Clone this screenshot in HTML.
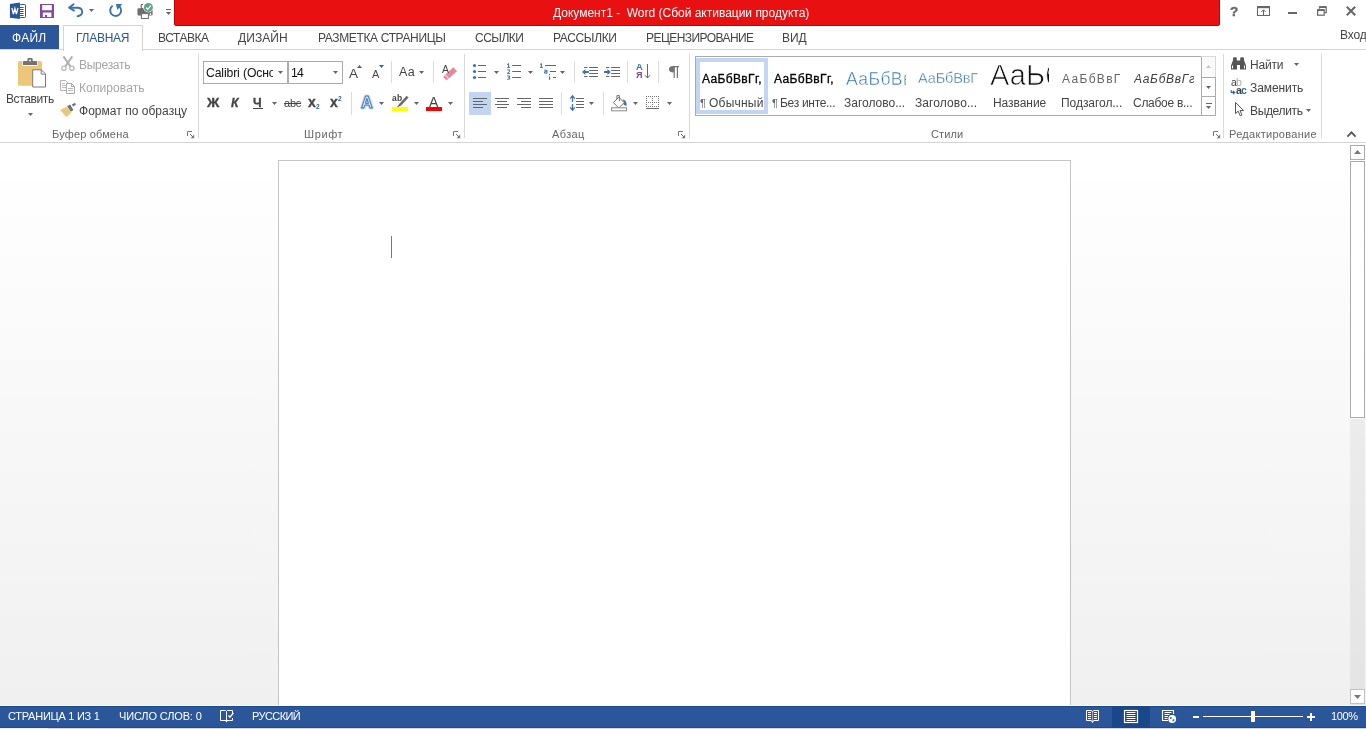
<!DOCTYPE html>
<html lang="ru">
<head>
<meta charset="utf-8">
<title>Документ1 - Word</title>
<style>
html,body{margin:0;padding:0;background:#fff;}
body{width:1366px;height:729px;overflow:hidden;font-family:"Liberation Sans",sans-serif;font-size:12px;}
#w{position:relative;width:1366px;height:729px;overflow:hidden;background:#fff;}
#w div,#w svg{position:absolute;}
.t{white-space:nowrap;will-change:transform;}
.vs{width:1px;background:#dcdcdc;}
.gs{width:1px;background:#dadada;top:54px;height:84px;}
.ar{width:5px;height:3px;background:#666;clip-path:polygon(0 0,100% 0,50% 100%);}
.au{width:5px;height:3px;background:#666;clip-path:polygon(0 100%,100% 100%,50% 0);}
</style>
</head>
<body>
<div id="w">
<!-- title bar -->
<div style="left:174px;top:-2px;width:1044px;height:26px;background:#e81010;border:1px solid #c40404;border-radius:2px;"></div>
<!-- tabs row -->
<div style="left:0;top:25px;width:59px;height:24px;background:#2b579a;"></div>
<div style="left:0;top:49px;width:1366px;height:1px;background:#d4d4d4;"></div>
<div style="left:63px;top:25px;width:78px;height:25px;background:#fff;border:1px solid #d4d4d4;border-bottom:none;"></div>
<!-- ribbon -->
<div style="left:0;top:142px;width:1366px;height:1px;background:#d4d4d4;"></div>
<div class="gs" style="left:198px;"></div>
<div class="gs" style="left:464px;"></div>
<div class="gs" style="left:689px;"></div>
<div class="gs" style="left:1223px;"></div>
<div class="gs" style="left:1321px;"></div>
<!-- workspace -->
<div style="left:0;top:143px;width:1366px;height:563px;background:linear-gradient(#fff 0px,#fff 17px,#f0f0f0 563px);"></div>
<div style="left:278px;top:160px;width:791px;height:560px;background:#fff;border:1px solid #c6c6c6;"></div>
<div style="left:391px;top:236px;width:1px;height:22px;background:#777;"></div>
<!-- scrollbar -->
<div style="left:1350px;top:419px;width:15px;height:286px;background:rgba(0,0,0,0.048);"></div>
<div style="left:1350px;top:145px;width:13px;height:13px;background:#fff;border:1px solid #ababab;"></div>
<div style="left:1350px;top:161px;width:13px;height:255px;background:#fff;border:1px solid #ababab;"></div>
<div style="left:1350px;top:689px;width:13px;height:13px;background:#fff;border:1px solid #c2c2c2;"></div>
<div style="left:0;top:705px;width:1366px;height:1px;background:#fbf9f5;"></div>
<!-- status bar -->
<div style="left:0;top:706px;width:1366px;height:22px;background:#2b579a;border-top:1px solid #1d4b90;border-bottom:1px solid #1d4b90;box-sizing:border-box;"></div>
<div style="left:1112px;top:706px;width:38px;height:22px;background:#19478a;"></div>
<div style="left:0;top:728px;width:1366px;height:1px;background:#d9d5d0;"></div>
<div style="left:0;top:728px;width:48px;height:1px;background:#e8f0f8;"></div>
<!-- font combos -->
<div style="left:203px;top:61px;width:83px;height:21px;background:#fff;border:1px solid #ababab;"></div>
<div style="left:288px;top:61px;width:53px;height:21px;background:#fff;border:1px solid #ababab;"></div>
<!-- selected align-left -->
<div style="left:469px;top:92px;width:22px;height:23px;background:#c2d5f2;"></div>
<!-- styles gallery -->
<div style="left:695px;top:56px;width:519px;height:58px;background:#fff;border:1px solid #ababab;"></div>
<div style="left:696px;top:58px;width:64px;height:48px;border:4px solid #c2d5f2;"></div>
<div style="left:1201px;top:56px;width:13px;height:58px;border:1px solid #ababab;background:#fff;"></div>
<div style="left:1201px;top:77px;width:15px;height:1px;background:#ababab;"></div>
<div style="left:1201px;top:96px;width:15px;height:1px;background:#ababab;"></div>
<!-- QAT icons -->
<svg style="left:9px;top:2px" width="18" height="18" viewBox="0 0 18 18">
 <rect x="10.5" y="2.5" width="6" height="13" fill="#fff" stroke="#2b579a" rx="0.8"/>
 <path d="M11 5.5H14.6M11 7.5H14.6M11 9.5H14.6M11 11.5H14.6M11 13.5H14.6" stroke="#2b579a" stroke-width="1"/>
 <path d="M0.9 2L10.9 0.6V16.9L0.9 15.7Z" fill="#2b579a"/>
 <path d="M2.9 5.8L4.4 12.2L5.9 6.6L7.4 12.2L8.9 5.8" fill="none" stroke="#fff" stroke-width="1.3"/>
</svg>
<svg style="left:40px;top:4px" width="14" height="14" viewBox="0 0 14 14">
 <path d="M0 0H14V14H0Z M2.2 0.9V6.2H11.8V0.9Z M2.8 8.6V12.9H5V11H7V12.9H11.4V8.6Z" fill="#8647a6" fill-rule="evenodd"/>
</svg>
<svg style="left:68px;top:3px" width="16" height="15" viewBox="0 0 16 15">
 <path d="M1.2 4.6L5.6 1.2M1.2 4.6L6 7.6" stroke="#3a72b4" stroke-width="1.9" fill="none" stroke-linecap="round"/>
 <path d="M2 4.7H9.2C12.4 4.7 14.2 6.6 14.2 9C14.2 11.2 12.6 12.6 9.6 13.2" stroke="#3a72b4" stroke-width="1.9" fill="none" stroke-linecap="round"/>
</svg>
<div class="ar" style="left:89px;top:9px;"></div>
<svg style="left:108px;top:3px" width="16" height="15" viewBox="0 0 16 15">
 <path d="M11.6 3.6A5.5 5.5 0 1 1 4.7 2.8" stroke="#3a72b4" stroke-width="1.9" fill="none"/>
 <path d="M7.9 1H14.2L9.4 7Z" fill="#3a72b4"/>
</svg>
<svg style="left:136px;top:2px" width="18" height="18" viewBox="0 0 18 18">
 <path d="M7 2.5H5.2V6.5H7" stroke="#555" stroke-width="1" fill="none"/>
 <path d="M1.5 7.2Q1.5 6.2 2.5 6.2H15.5Q16.6 6.2 16.6 7.2V12.6Q16.6 13.6 15.5 13.6H2.5Q1.5 13.6 1.5 12.6Z" fill="#6e6e6e"/>
 <rect x="5.4" y="11.6" width="7" height="4.9" fill="#fff" stroke="#6e6e6e" stroke-width="1"/>
 <circle cx="14.5" cy="12.1" r="0.9" fill="#fff"/>
 <circle cx="12.4" cy="5.4" r="5.1" fill="#fff"/>
 <circle cx="12.4" cy="5.4" r="4.5" fill="#5fa48a"/>
 <path d="M10.1 5.6L11.8 7.3L14.8 3.7" stroke="#fff" stroke-width="1.3" fill="none"/>
</svg>
<div style="left:166px;top:9px;width:5px;height:1px;background:#666;"></div>
<div class="ar" style="left:166px;top:12px;"></div>
<!-- Clipboard group -->
<svg style="left:16px;top:56px" width="32" height="33" viewBox="0 0 32 33">
 <rect x="2" y="5" width="24" height="24.8" rx="1.6" fill="#ecc679"/>
 <rect x="6.4" y="4.6" width="15.2" height="5.2" fill="#fff"/>
 <path d="M7 5.8Q7 5 7.8 5H11.4V3.2Q11.4 2 12.6 2H15.5Q16.7 2 16.7 3.2V5H20.2Q21 5 21 5.8V9H7Z" fill="#737373"/>
 <rect x="13.2" y="3.6" width="1.7" height="1.7" fill="#fff"/>
 <path d="M16.7 13.8H25.4L29.5 17.9V31H16.7Z" fill="#fff" stroke="#7a7a7a" stroke-width="1"/>
 <path d="M25.2 13.8V18.1H29.5" fill="none" stroke="#7a7a7a" stroke-width="1"/>
</svg>
<div class="ar" style="left:28px;top:113px;"></div>
<svg style="left:60px;top:55px" width="16" height="17" viewBox="0 0 16 17">
 <path d="M3.4 1.4L10.4 11.4M12.3 1.4L5.3 11.4" stroke="#b0b0b0" stroke-width="1.9" fill="none"/>
 <circle cx="3.9" cy="13.2" r="2.2" fill="#fff" stroke="#b0b0b0" stroke-width="1.1"/>
 <circle cx="11.9" cy="13.2" r="2.2" fill="#fff" stroke="#b0b0b0" stroke-width="1.1"/>
</svg>
<svg style="left:59px;top:79px" width="18" height="16" viewBox="0 0 18 16">
 <path d="M1.5 1.5H6.5L9 4V11.5H1.5Z" fill="#fff" stroke="#b9b2b9" stroke-width="1"/>
 <path d="M3 4.5H6M3 6.5H7.5M3 8.5H7.5" stroke="#c4bec4" stroke-width="1"/>
 <path d="M7.5 4.5H12.5L15.5 7.5V14.5H7.5Z" fill="#fff" stroke="#b0a9b0" stroke-width="1"/>
 <path d="M12.5 4.5V7.5H15.5" fill="none" stroke="#b0a9b0" stroke-width="1"/>
 <path d="M9 9.5H14M9 11.5H14" stroke="#bdb7bd" stroke-width="1"/>
</svg>
<svg style="left:59px;top:102px" width="19" height="16" viewBox="0 0 19 16">
 <path d="M1.2 7.9L7.5 4.7L12.3 10.5L8.6 14.2L7 14.7Z" fill="#ecc679"/>
 <path d="M8.1 4.2L11.2 2.4L14.4 7.9L11.8 9.8Z" fill="#737373"/>
 <path d="M12.8 2.6L16 0.8L17 2.6L14.2 4.4Z" fill="#737373"/>
</svg>
<!-- Font group -->
<div class="ar" style="left:278px;top:71px;"></div>
<div class="ar" style="left:333px;top:71px;"></div>
<div style="left:253px;top:108px;width:10px;height:1px;background:#444;"></div>
<div class="ar" style="left:272px;top:102px;"></div>
<div class="au" style="left:357px;top:65px;background:#2b66b0;"></div>
<div class="ar" style="left:379px;top:65px;background:#2b66b0;"></div>
<div class="vs" style="left:391px;top:61px;height:22px;"></div>
<div class="ar" style="left:419px;top:71px;"></div>
<div class="vs" style="left:433px;top:61px;height:22px;"></div>
<svg style="left:440px;top:65px" width="19" height="18" viewBox="0 0 19 18">
 <path d="M4.7 10.3L13.3 2.2L17 6.2L8.1 14Z" fill="#e8879b"/>
 <path d="M4.7 10.3L8.1 14L7.1 14.9Q6.5 15.4 5.9 14.8L3.7 12.4Q3.2 11.8 3.8 11.2Z" fill="#e8879b"/>
 <path d="M5.3 9.8L8.7 13.5" stroke="#fff" stroke-width="0.9"/>
</svg>
<div class="vs" style="left:351px;top:92px;height:23px;"></div>
<svg style="left:358px;top:93px" width="18" height="19" viewBox="0 0 18 19">
 <text x="8.9" y="15" text-anchor="middle" font-family="Liberation Sans, sans-serif" font-size="16" font-weight="bold" fill="#fff" stroke="#d5e3f5" stroke-width="3" stroke-linejoin="round">A</text>
 <text x="8.9" y="15" text-anchor="middle" font-family="Liberation Sans, sans-serif" font-size="16" font-weight="bold" fill="#fff" stroke="#3a73b8" stroke-width="1" stroke-linejoin="round">A</text>
</svg>
<div class="ar" style="left:379px;top:102px;"></div>
<div style="left:392px;top:107px;width:16px;height:4px;background:#ffff00;"></div>
<svg style="left:395px;top:94px" width="15" height="14" viewBox="0 0 15 14">
 <path d="M11.6 1.8L13.6 3.4L6.2 11.6L4.2 10Z" fill="#6a6a6a"/>
 <path d="M4.2 10L6.2 11.6L2 13.2Z" fill="#555"/>
</svg>
<div class="ar" style="left:414px;top:102px;"></div>
<div style="left:426px;top:107px;width:16px;height:4px;background:#ff0000;"></div>
<div class="ar" style="left:448px;top:102px;"></div>
<!-- Paragraph group row1 -->
<svg style="left:472px;top:63px" width="16" height="17" viewBox="0 0 16 17" shape-rendering="auto">
 <circle cx="2.5" cy="2.5" r="1.6" fill="#3b72b0"/><circle cx="2.5" cy="8.5" r="1.6" fill="#3b72b0"/><circle cx="2.5" cy="14.5" r="1.6" fill="#3b72b0"/>
 <path d="M6 2.5H14M6 8.5H14M6 14.5H14" stroke="#666" stroke-width="1"/>
</svg>
<div class="ar" style="left:494px;top:71px;"></div>
<svg style="left:506px;top:62px" width="16" height="19" viewBox="0 0 16 19">
 <path d="M6.2 3.5H15M6.2 9.5H15M6.2 15.5H15" stroke="#666" stroke-width="1"/>
 <path d="M1.2 2.6L2.6 1.6V5.4M1.2 5.4H4" stroke="#3b72b0" stroke-width="1" fill="none"/>
 <path d="M1.2 7.9H3.6V9.4L1.2 11.4H4" stroke="#3b72b0" stroke-width="1" fill="none"/>
 <path d="M1.2 13.9H3.6V15.4H2.2M3.6 15.4V17.2H1.2" stroke="#3b72b0" stroke-width="1" fill="none"/>
</svg>
<div class="ar" style="left:528px;top:71px;"></div>
<svg style="left:539px;top:62px" width="18" height="19" viewBox="0 0 18 19">
 <path d="M6 3.5H17M10.8 9.5H17M14 15.5H17" stroke="#666" stroke-width="1"/>
 <path d="M1 2.6L2.4 1.6V5.4M1 5.4H3.8" stroke="#3b72b0" stroke-width="1" fill="none"/>
 <path d="M5.2 8.2H8V11.2H5.6V9.7H8" stroke="#3b72b0" stroke-width="1" fill="none"/>
 <path d="M10.6 14.4V17.8M10.6 12V13.2" stroke="#3b72b0" stroke-width="1.2" fill="none"/>
</svg>
<div class="ar" style="left:560px;top:71px;"></div>
<div class="vs" style="left:574px;top:61px;height:22px;"></div>
<svg style="left:581px;top:64px" width="18" height="16" viewBox="0 0 18 16">
 <path d="M3 3.5H6.4M8.2 3.5H17M8.2 6.5H17M8.2 9.5H17M3 12.5H6.4M8.2 12.5H17" stroke="#666" stroke-width="1"/>
 <path d="M1 8L4.4 5V7H7.8V9H4.4V11Z" fill="#3b72b0"/>
</svg>
<svg style="left:603px;top:64px" width="18" height="16" viewBox="0 0 18 16">
 <path d="M3 3.5H6.4M8.2 3.5H17M8.2 6.5H17M8.2 9.5H17M3 12.5H6.4M8.2 12.5H17" stroke="#666" stroke-width="1"/>
 <path d="M7.8 8L4.4 5V7H1V9H4.4V11Z" fill="#3b72b0"/>
</svg>
<div class="vs" style="left:627px;top:61px;height:22px;"></div>
<svg style="left:644px;top:63px" width="8" height="17" viewBox="0 0 8 17">
 <path d="M3.5 1V15M1 12.2L3.5 15L6 12.2" stroke="#666" stroke-width="1" fill="none"/>
</svg>
<div class="vs" style="left:658px;top:61px;height:22px;"></div>
<svg style="left:668px;top:65px" width="12" height="14" viewBox="0 0 12 14">
 <path d="M5.4 1H11V2.2H10V13H8.8V2.2H6.8V13H5.6V7.4Q1 7.4 1 4.2Q1 1 5.4 1Z" fill="#737373"/>
</svg>
<!-- Paragraph group row2 -->
<svg style="left:473px;top:97px" width="14" height="12" viewBox="0 0 14 12"><path d="M0 1.5H14M0 4.5H10M0 7.5H14M0 10.5H10" stroke="#666" stroke-width="1.1"/></svg>
<svg style="left:495px;top:97px" width="14" height="12" viewBox="0 0 14 12"><path d="M0 1.5H14M2 4.5H12M0 7.5H14M2 10.5H12" stroke="#666" stroke-width="1.1"/></svg>
<svg style="left:517px;top:97px" width="14" height="12" viewBox="0 0 14 12"><path d="M0 1.5H14M4 4.5H14M0 7.5H14M4 10.5H14" stroke="#666" stroke-width="1.1"/></svg>
<svg style="left:539px;top:97px" width="14" height="12" viewBox="0 0 14 12"><path d="M0 1.5H14M0 4.5H14M0 7.5H14M0 10.5H14" stroke="#666" stroke-width="1.1"/></svg>
<div class="vs" style="left:561px;top:92px;height:23px;"></div>
<svg style="left:569px;top:94px" width="16" height="18" viewBox="0 0 16 18">
 <path d="M7 4.5H15M7 7.5H15M7 10.5H15M7 13.5H15" stroke="#666" stroke-width="1.1"/>
 <path d="M3.5 2V8M3.5 10V16M1.2 4.6L3.5 1.8L5.8 4.6M1.2 13.4L3.5 16.2L5.8 13.4" stroke="#3b72b0" stroke-width="1.3" fill="none"/>
</svg>
<div class="ar" style="left:589px;top:102px;"></div>
<div class="vs" style="left:603px;top:92px;height:23px;"></div>
<svg style="left:610px;top:94px" width="18" height="18" viewBox="0 0 18 18">
 <path d="M13 5.2Q17 6.6 16.6 11.8Q15 12 13.8 10.6Z" fill="#3b72b0"/>
 <path d="M8.8 3.2L14.2 8.6L8.8 14L3.4 8.6Z" fill="#fff" stroke="#737373" stroke-width="1"/>
 <path d="M6.9 5V1.6H9.4V7.2" fill="none" stroke="#737373" stroke-width="1"/>
 <rect x="1.6" y="13.8" width="15" height="3" fill="#fff" stroke="#8a8a8a" stroke-width="1"/>
</svg>
<div class="ar" style="left:633px;top:102px;"></div>
<svg style="left:646px;top:96px" width="14" height="14" viewBox="0 0 14 14">
 <path d="M0 0.5H13M0 6.5H13M0 10.5H13" stroke="#777" stroke-width="1" stroke-dasharray="1 1"/>
 <path d="M0.5 0V11M6.5 0V11M12.5 0V11" stroke="#777" stroke-width="1" stroke-dasharray="1 1"/>
 <path d="M0 12.5H13" stroke="#666" stroke-width="1"/>
</svg>
<div class="ar" style="left:667px;top:102px;"></div>
<!-- gallery scroll buttons -->
<div style="left:1202px;top:57px;width:13px;height:20px;background:#fafafa;"></div>
<div style="left:1201px;top:56px;width:15px;height:1px;background:#d8d8d8;"></div>
<div style="left:1215px;top:56px;width:1px;height:21px;background:#d8d8d8;"></div>
<div class="au" style="left:1206px;top:65px;background:#c6c6c6;"></div>
<div class="ar" style="left:1206px;top:86px;"></div>
<div style="left:1206px;top:103px;width:6px;height:1px;background:#666;"></div>
<div class="ar" style="left:1206px;top:106px;"></div>
<!-- dialog launchers -->
<svg class="dl" style="left:187px;top:131px" width="8" height="8" viewBox="0 0 8 8"><path d="M0.5 5V0.5H5M3 3L6.4 6.4" stroke="#777" stroke-width="1" fill="none"/><path d="M7.2 3.6V7.2H3.6Z" fill="#777"/></svg>
<svg class="dl" style="left:453px;top:131px" width="8" height="8" viewBox="0 0 8 8"><path d="M0.5 5V0.5H5M3 3L6.4 6.4" stroke="#777" stroke-width="1" fill="none"/><path d="M7.2 3.6V7.2H3.6Z" fill="#777"/></svg>
<svg class="dl" style="left:678px;top:131px" width="8" height="8" viewBox="0 0 8 8"><path d="M0.5 5V0.5H5M3 3L6.4 6.4" stroke="#777" stroke-width="1" fill="none"/><path d="M7.2 3.6V7.2H3.6Z" fill="#777"/></svg>
<svg class="dl" style="left:1212.6px;top:131px" width="8" height="8" viewBox="0 0 8 8"><path d="M0.5 5V0.5H5M3 3L6.4 6.4" stroke="#777" stroke-width="1" fill="none"/><path d="M7.2 3.6V7.2H3.6Z" fill="#777"/></svg>
<svg style="left:1346px;top:130px" width="11" height="8" viewBox="0 0 11 8"><path d="M1.4 6.6L5.5 2.4L9.6 6.6" stroke="#555" stroke-width="1.8" fill="none"/></svg>
<!-- Editing group -->
<svg style="left:1230px;top:56px" width="17" height="15" viewBox="0 0 17 15">
 <path d="M3 2.4Q3 1.2 4.2 1.2H5.6Q6.8 1.2 6.8 2.4V4.6H10.200000000000001V2.4Q10.2 1.2 11.4 1.2H12.8Q14 1.2 14 2.4V4.2L16 9.4V13.4H10V9H7V13.4H1V9.4L3 4.2Z" fill="#555"/>
 <path d="M2.5 9.5V12.4M14.5 9.5V12.4" stroke="#fff" stroke-width="1"/>
</svg>
<div class="ar" style="left:1294px;top:63px;"></div>
<svg style="left:1230px;top:90px" width="6" height="5" viewBox="0 0 6 5"><path d="M1.2 0V2.4H4.6M3 0.8L4.8 2.4L3 4" stroke="#2b66b0" stroke-width="1.1" fill="none"/></svg>
<svg style="left:1234px;top:101px" width="11" height="17" viewBox="0 0 11 17">
 <path d="M1.5 1.4V12.6L4.2 10.2L6.2 14.8L8 14L6 9.6H9.6Z" fill="#fff" stroke="#555" stroke-width="1" stroke-linejoin="miter"/>
</svg>
<div class="ar" style="left:1306px;top:109px;"></div>
<!-- window controls -->
<svg style="left:1256px;top:5px" width="15" height="12" viewBox="0 0 15 12">
 <rect x="1.5" y="1.5" width="12" height="9" fill="none" stroke="#666" stroke-width="1"/>
 <path d="M1.5 2.5H13.5" stroke="#666" stroke-width="1.4"/>
 <path d="M7.5 10V5M5.3 7L7.5 4.8L9.7 7" stroke="#666" stroke-width="1" fill="none"/>
</svg>
<div style="left:1288px;top:12px;width:9px;height:2px;background:#666;"></div>
<svg style="left:1316px;top:5px" width="12" height="12" viewBox="0 0 12 12">
 <path d="M3.5 3.8V1.8H10.2V7.6H8.4" fill="none" stroke="#666" stroke-width="1.2"/>
 <path d="M3.5 2.2H10.2" stroke="#666" stroke-width="1.6"/>
 <rect x="1.6" y="4.8" width="6.6" height="5.4" fill="#fff" stroke="#666" stroke-width="1.2"/>
 <path d="M1.6 5.2H8.2" stroke="#666" stroke-width="1.6"/>
</svg>
<svg style="left:1345px;top:5px" width="12" height="12" viewBox="0 0 12 12">
 <path d="M1.8 1.8L10.2 10.2M10.2 1.8L1.8 10.2" stroke="#666" stroke-width="2" fill="none"/>
</svg>
<!-- status bar icons -->
<svg style="left:219px;top:709px" width="16" height="15" viewBox="0 0 16 15">
 <path d="M1.5 1.5H6.5L7.5 2.5V11.5H1.5Z" fill="none" stroke="#fff" stroke-width="1"/>
 <path d="M7.5 2.5L8.5 1.5H13.5V5M7.5 11.5H13.5V9" fill="none" stroke="#fff" stroke-width="1"/>
 <path d="M6 11.5L7.5 13.6L9 11.5Z" fill="#fff"/>
 <path d="M9.4 6.4L11 8.2L14.4 3.8" fill="none" stroke="#fff" stroke-width="1.3"/>
</svg>
<svg style="left:1085px;top:709px" width="15" height="15" viewBox="0 0 15 15">
 <path d="M1.5 1.5H6L7.5 2.5L9 1.5H13.5V11.5H9L7.5 12.5L6 11.5H1.5Z" fill="none" stroke="#fff" stroke-width="1"/>
 <path d="M3 3.5H6M3 5.5H6M3 7.5H6M3 9.5H6M9 3.5H12M9 5.5H12M9 7.5H12M9 9.5H12" stroke="#fff" stroke-width="1"/>
 <path d="M7.5 2.5V12.5" stroke="#fff" stroke-width="1.2" stroke-dasharray="1 1"/>
 <path d="M6.2 12.2L7.5 14L8.8 12.2Z" fill="#fff"/>
</svg>
<svg style="left:1123px;top:709px" width="16" height="15" viewBox="0 0 16 15">
 <rect x="1.5" y="1.5" width="13" height="12" fill="none" stroke="#fff" stroke-width="1.2"/>
 <path d="M3.5 3.5H12.5M3.5 5.5H12.5M3.5 7.5H12.5M3.5 9.5H12.5M3.5 11.5H12.5" stroke="#fff" stroke-width="1"/>
</svg>
<svg style="left:1161px;top:709px" width="17" height="16" viewBox="0 0 17 16">
 <path d="M12.5 5V1.5H1.5V11.5H7" fill="none" stroke="#fff" stroke-width="1.1"/>
 <path d="M3.5 3.5H10.5M3.5 5.5H8.5M3.5 7.5H7M3.5 9.5H6.5" stroke="#fff" stroke-width="1"/>
 <circle cx="11.2" cy="10" r="3.9" fill="#fff"/>
 <path d="M9 8.4Q10.4 7.4 11 8.8Q10 10.4 9.2 10Z M11.6 10.6Q13.2 9.6 13.6 11Q12.6 12.8 11.6 12.4Z" fill="#2b579a"/>
</svg>
<div style="left:1193px;top:716px;width:6px;height:2px;background:#fff;"></div>
<div style="left:1203px;top:716px;width:100px;height:1px;background:#fff;"></div>
<div style="left:1251px;top:711px;width:4px;height:11px;background:#fff;"></div>
<div style="left:1307px;top:716px;width:8px;height:2px;background:#fff;"></div>
<div style="left:1310px;top:713px;width:2px;height:8px;background:#fff;"></div>
<!-- scrollbar arrows -->
<svg style="left:1354px;top:150px" width="7" height="4" viewBox="0 0 7 4"><path d="M0 4L3.5 0L7 4Z" fill="#777"/></svg>
<svg style="left:1354px;top:695px" width="7" height="4" viewBox="0 0 7 4"><path d="M0 0L3.5 4L7 0Z" fill="#777"/></svg>
<div class="t" style="left:553.4px;top:4.5px;font-size:12px;line-height:16px;color:#fff;letter-spacing:-0.01px;white-space:pre;">Документ1 -  Word (Сбой активации продукта)</div>
<div class="t" style="left:1340.4px;top:26.8px;font-size:12px;line-height:16px;color:#444;letter-spacing:-0.14px;">Вход</div>
<div class="t" style="left:11.8px;top:29.5px;font-size:12px;line-height:16px;color:#fff;letter-spacing:0.28px;">ФАЙЛ</div>
<div class="t" style="left:76.4px;top:29.5px;font-size:12px;line-height:16px;color:#2b579a;letter-spacing:-0.26px;">ГЛАВНАЯ</div>
<div class="t" style="left:158.4px;top:29.5px;font-size:12px;line-height:16px;color:#444;letter-spacing:-0.46px;">ВСТАВКА</div>
<div class="t" style="left:238.4px;top:29.5px;font-size:12px;line-height:16px;color:#444;letter-spacing:0.08px;">ДИЗАЙН</div>
<div class="t" style="left:317.6px;top:29.5px;font-size:12px;line-height:16px;color:#444;letter-spacing:-0.36px;">РАЗМЕТКА СТРАНИЦЫ</div>
<div class="t" style="left:474.7px;top:29.5px;font-size:12px;line-height:16px;color:#444;letter-spacing:-0.49px;">ССЫЛКИ</div>
<div class="t" style="left:552.8px;top:29.5px;font-size:12px;line-height:16px;color:#444;letter-spacing:-0.35px;">РАССЫЛКИ</div>
<div class="t" style="left:645.6px;top:29.5px;font-size:12px;line-height:16px;color:#444;letter-spacing:-0.56px;">РЕЦЕНЗИРОВАНИЕ</div>
<div class="t" style="left:782.2px;top:29.5px;font-size:12px;line-height:16px;color:#444;letter-spacing:-0.06px;">ВИД</div>
<div class="t" style="left:6.4px;top:90.8px;font-size:12px;line-height:16px;color:#444;letter-spacing:-0.38px;">Вставить</div>
<div class="t" style="left:78.9px;top:57.0px;font-size:12px;line-height:16px;color:#a6a6a6;letter-spacing:-0.27px;">Вырезать</div>
<div class="t" style="left:78.9px;top:80.0px;font-size:12px;line-height:16px;color:#a6a6a6;letter-spacing:0.11px;">Копировать</div>
<div class="t" style="left:78.9px;top:103.0px;font-size:12px;line-height:16px;color:#444;letter-spacing:0.03px;">Формат по образцу</div>
<div class="t" style="left:51.9px;top:126.5px;font-size:11px;line-height:15px;color:#666;letter-spacing:0.16px;">Буфер обмена</div>
<div class="t" style="left:303.9px;top:126.5px;font-size:11px;line-height:15px;color:#666;letter-spacing:0.60px;">Шрифт</div>
<div class="t" style="left:552.4px;top:126.5px;font-size:11px;line-height:15px;color:#666;letter-spacing:0.37px;">Абзац</div>
<div class="t" style="left:931.4px;top:126.5px;font-size:11px;line-height:15px;color:#666;letter-spacing:0.10px;">Стили</div>
<div class="t" style="left:1229.2px;top:126.5px;font-size:11px;line-height:15px;color:#666;letter-spacing:0.29px;">Редактирование</div>
<div class="t" style="left:205.8px;top:64.7px;font-size:12.2px;line-height:16.2px;color:#111;letter-spacing:-0.12px;width:67.2px;overflow:hidden;white-space:nowrap;">Calibri (Основной текст)</div>
<div class="t" style="left:291.4px;top:64.7px;font-size:12.2px;line-height:16.2px;color:#111;letter-spacing:-0.68px;">14</div>
<div class="t" style="left:1250.4px;top:57.2px;font-size:12px;line-height:16px;color:#444;letter-spacing:-0.17px;">Найти</div>
<div class="t" style="left:1249.7px;top:79.8px;font-size:12px;line-height:16px;color:#444;letter-spacing:-0.08px;">Заменить</div>
<div class="t" style="left:1250.4px;top:102.6px;font-size:12px;line-height:16px;color:#444;letter-spacing:-0.34px;">Выделить</div>
<div class="t" style="left:709.4px;top:95.0px;font-size:12px;line-height:16px;color:#444;letter-spacing:0.22px;">Обычный</div>
<div class="t" style="left:780.4px;top:95.0px;font-size:12px;line-height:16px;color:#444;letter-spacing:-0.30px;">Без инте...</div>
<div class="t" style="left:844.4px;top:95.0px;font-size:12px;line-height:16px;color:#444;">Заголово...</div>
<div class="t" style="left:915.4px;top:95.0px;font-size:12px;line-height:16px;color:#444;letter-spacing:0.09px;">Заголово...</div>
<div class="t" style="left:993.4px;top:95.0px;font-size:12px;line-height:16px;color:#444;letter-spacing:-0.05px;">Название</div>
<div class="t" style="left:1060.9px;top:95.0px;font-size:12px;line-height:16px;color:#444;letter-spacing:-0.05px;">Подзагол...</div>
<div class="t" style="left:1133.4px;top:95.0px;font-size:12px;line-height:16px;color:#444;letter-spacing:-0.28px;">Слабое в...</div>
<div class="t" style="left:8.4px;top:708.9px;font-size:11px;line-height:15px;color:#fff;letter-spacing:-0.26px;">СТРАНИЦА 1 ИЗ 1</div>
<div class="t" style="left:119.4px;top:708.9px;font-size:11px;line-height:15px;color:#fff;letter-spacing:-0.15px;">ЧИСЛО СЛОВ: 0</div>
<div class="t" style="left:252.4px;top:708.9px;font-size:11px;line-height:15px;color:#fff;letter-spacing:-0.57px;">РУССКИЙ</div>
<div class="t" style="left:1331.0px;top:708.9px;font-size:11px;line-height:15px;color:#fff;letter-spacing:-0.34px;">100%</div>
<div class="t" style="left:702.4px;top:70.6px;font-size:12px;line-height:16px;color:#000;letter-spacing:0.35px;-webkit-text-stroke:0.3px #000;">АаБбВвГг,</div>
<div class="t" style="left:774.4px;top:70.6px;font-size:12px;line-height:16px;color:#000;letter-spacing:0.35px;-webkit-text-stroke:0.3px #000;">АаБбВвГг,</div>
<div class="t" style="left:845.9px;top:68.6px;font-size:17.6px;line-height:21.6px;color:#2e74b5;letter-spacing:0.38px;width:60px;overflow:hidden;-webkit-text-stroke:0.45px #fff;">АаБбВв</div>
<div class="t" style="left:918.0px;top:69.2px;font-size:14.5px;line-height:18.5px;color:#2e74b5;letter-spacing:-0.12px;width:60px;overflow:hidden;-webkit-text-stroke:0.35px #fff;">АаБбВвГ</div>
<div class="t" style="left:990.3px;top:58.7px;font-size:29px;line-height:33px;color:#111;letter-spacing:0.09px;width:59px;overflow:hidden;-webkit-text-stroke:0.7px #fff;">АаЬб</div>
<div class="t" style="left:1061.9px;top:70.6px;font-size:12px;line-height:16px;color:#666;letter-spacing:1.32px;">АаБбВвГ</div>
<div class="t" style="left:1134.4px;top:70.6px;font-size:12px;line-height:16px;color:#404040;letter-spacing:0.72px;font-style:italic;width:59.5px;overflow:hidden;">АаБбВвГг</div>
<div class="t" style="left:700.0px;top:95.5px;font-size:11px;line-height:15px;color:#666;letter-spacing:0.08px;">¶</div>
<div class="t" style="left:771.9px;top:95.5px;font-size:11px;line-height:15px;color:#666;letter-spacing:0.28px;">¶</div>
<div class="t" style="left:207.2px;top:94.8px;font-size:12.5px;line-height:16.5px;color:#444;letter-spacing:2.39px;font-weight:bold;-webkit-text-stroke:0.3px #444;transform:scaleX(1.09);transform-origin:0 0;">Ж</div>
<div class="t" style="left:230.6px;top:94.9px;font-size:12.3px;line-height:16.3px;color:#444;letter-spacing:2.14px;font-weight:bold;font-style:italic;-webkit-text-stroke:0.3px #444;">К</div>
<div class="t" style="left:253.4px;top:94.9px;font-size:12.3px;line-height:16.3px;color:#444;letter-spacing:0.16px;font-weight:bold;-webkit-text-stroke:0.3px #444;">Ч</div>
<div class="t" style="left:283.6px;top:95.5px;font-size:11px;line-height:15px;color:#444;letter-spacing:-0.22px;text-decoration:line-through;">abc</div>
<div class="t" style="left:307.6px;top:92.8px;font-size:14px;line-height:18px;color:#444;letter-spacing:1.20px;font-weight:bold;-webkit-text-stroke:0.3px #444;">x</div>
<div class="t" style="left:316.2px;top:101.5px;font-size:6.5px;line-height:10.5px;color:#2b66b0;letter-spacing:0.97px;font-weight:bold;">2</div>
<div class="t" style="left:329.6px;top:92.8px;font-size:14px;line-height:18px;color:#444;letter-spacing:0.80px;font-weight:bold;-webkit-text-stroke:0.3px #444;">x</div>
<div class="t" style="left:338.4px;top:93.5px;font-size:6.5px;line-height:10.5px;color:#2b66b0;letter-spacing:0.88px;font-weight:bold;">2</div>
<div class="t" style="left:348.6px;top:64.5px;font-size:13.5px;line-height:17.5px;color:#444;letter-spacing:1.58px;">A</div>
<div class="t" style="left:371.6px;top:66.6px;font-size:11px;line-height:15px;color:#444;letter-spacing:1.16px;">A</div>
<div class="t" style="left:398.6px;top:64.2px;font-size:12.5px;line-height:16.5px;color:#444;letter-spacing:0.35px;">Aa</div>
<div class="t" style="left:442.2px;top:61.8px;font-size:10.5px;line-height:14.5px;color:#444;letter-spacing:0.88px;">A</div>
<div class="t" style="left:429.1px;top:93.0px;font-size:14px;line-height:18px;color:#444;letter-spacing:0.96px;">A</div>
<div class="t" style="left:391.6px;top:92.2px;font-size:8.5px;line-height:12.5px;color:#444;letter-spacing:0.34px;font-weight:bold;">ab</div>
<div class="t" style="left:636.2px;top:61.4px;font-size:9.3px;line-height:13.3px;color:#3b72b0;letter-spacing:0.98px;font-weight:bold;">A</div>
<div class="t" style="left:636.4px;top:68.9px;font-size:9px;line-height:13px;color:#8b3fa8;letter-spacing:-0.07px;font-weight:bold;">Я</div>
<div class="t" style="left:1230.6px;top:75.3px;font-size:10.5px;line-height:14.5px;color:#444;letter-spacing:0.36px;">a</div>
<div class="t" style="left:1236.2px;top:75.3px;font-size:10.5px;line-height:14.5px;color:#aaa;letter-spacing:0.86px;">b</div>
<div class="t" style="left:1235.9px;top:83.3px;font-size:10.5px;line-height:14.5px;color:#444;letter-spacing:0.36px;font-weight:bold;">a</div>
<div class="t" style="left:1241.4px;top:83.3px;font-size:10.5px;line-height:14.5px;color:#2b66b0;letter-spacing:0.36px;font-weight:bold;">c</div>
<div class="t" style="left:1230.2px;top:2.8px;font-size:13.5px;line-height:17.5px;color:#666;letter-spacing:0.45px;font-weight:bold;-webkit-text-stroke:0.4px #666;">?</div>
</div>
</body>
</html>
